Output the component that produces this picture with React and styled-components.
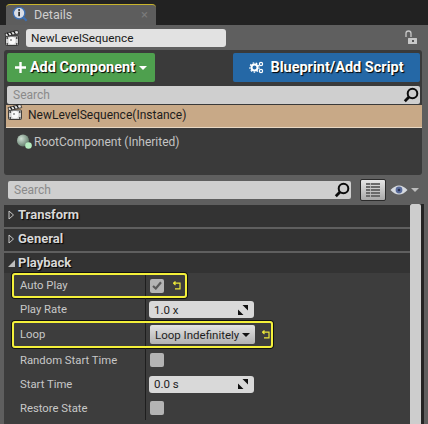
import React from 'react';
import styled, { createGlobalStyle } from 'styled-components';

const GlobalStyle = createGlobalStyle`
  html, body { margin: 0; padding: 0; background: #5f5f5f; }
  * { box-sizing: border-box; }
`;

const Window = styled.div`
  width: 428px;
  height: 424px;
  overflow: hidden;
  background: #5f5f5f;
  font-family: Roboto, "Liberation Sans", sans-serif;
  font-size: 12px;
  color: #d0d0d0;
`;

const TabBar = styled.div`
  height: 25px;
  padding: 4px 0 0 6px;
  background: #222222;
`;

const Tab = styled.div`
  width: 150px;
  height: 21px;
  display: flex;
  align-items: center;
  padding: 0 8px 2px 6px;
  gap: 6px;
  background: #5d5d5d;
  border-top: 1px solid #c9b42c;
  border-radius: 4px 4px 0 0;
  color: #cfcfcf;
  font-size: 12.5px;
`;

const TabClose = styled.span`
  margin-left: auto;
  color: #7a7a7a;
  font-size: 13px;
`;

const NameRow = styled.div`
  height: 25px;
  display: flex;
  align-items: center;
  padding: 0 10px 0 4px;
  gap: 6px;
`;

const NameInput = styled.div`
  width: 200px;
  height: 18px;
  line-height: 18px;
  padding-left: 5px;
  background: #e2e2e2;
  border-radius: 3px;
  color: #1a1a1a;
  font-size: 11.8px;
`;

const LockIcon = styled.svg`
  margin-left: auto;
`;

const ActorPanel = styled.div`
  height: 125px;
  margin: 0 6px 0 4px;
  padding: 3px 2px 0 3px;
  background: #3a3a3a;
  border-radius: 3px;
`;

const ButtonRow = styled.div`
  display: flex;
  justify-content: space-between;
  height: 29px;
`;

const ActionButton = styled.div`
  width: ${p => p.$width}px;
  display: flex;
  align-items: center;
  justify-content: center;
  gap: ${p => p.$gap}px;
  background: ${p => p.$color};
  border-radius: 2px;
  color: #ffffff;
  font-size: 14.5px;
  font-weight: 700;
  text-shadow: 1px 1px 1px #000000;
`;

const SearchBox = styled.div`
  display: flex;
  align-items: center;
  justify-content: space-between;
  height: 18px;
  padding: 0 1px 0 6px;
  background: #cfcfcf;
  border-radius: 2px;
  color: #8a8a8a;
  font-size: 12px;
`;

const ActorSearch = styled(SearchBox)`
  margin-top: 4px;
`;

const SelectedRow = styled.div`
  display: flex;
  align-items: center;
  gap: 5px;
  height: 23px;
  margin: 1px -2px 0 -1px;
  padding: 0 0 3px 1px;
  background: #c8a987;
  border-bottom: 1px solid #e8d8c4;
  color: #1c1c1c;
  font-size: 12px;
`;

const SelectedIcon = styled.span`
  display: flex;
  margin-top: -6px;
`;

const TreeRow = styled.div`
  display: flex;
  align-items: center;
  gap: 1px;
  height: 18px;
  margin-top: 5px;
  padding-left: 9px;
  color: #c4c4c4;
  font-size: 12px;
`;

const FilterRow = styled.div`
  height: 29px;
  display: flex;
  align-items: center;
  padding: 1px 0 0 8px;
`;

const FilterSearch = styled(SearchBox)`
  width: 343px;
`;

const ViewButton = styled.div`
  width: 26px;
  height: 22px;
  margin-left: 9px;
  display: flex;
  align-items: center;
  justify-content: center;
  background: linear-gradient(#e6e6e6, #a9a9a9);
  border: 1px solid #2b2b2b;
  border-radius: 2px;
`;

const EyeWrap = styled.div`
  display: flex;
  align-items: center;
  gap: 3px;
  margin-left: 4px;
`;

const DetailsArea = styled.div`
  display: flex;
  height: 220px;
  margin: 0 4px;
  padding-right: 3px;
  background: #242424;
`;

const PropertyList = styled.div`
  flex: 1;
  display: flex;
  flex-direction: column;
  gap: 2px;
  padding-top: 1px;
  background: #5f5f5f;
`;

const Scrollbar = styled.div`
  width: 11px;
  background: #cdcdcd;
  border-radius: 2px 2px 0 0;
`;

const Category = styled.div`
  flex: none;
  height: ${p => p.$height}px;
  display: flex;
  align-items: center;
  gap: 3px;
  padding: 0 0 ${p => p.$drop}px 4px;
  background: #333333;
  color: #d8d8d8;
  font-size: 13px;
  font-weight: 700;
  text-shadow: 1px 1px 1px #000000;
`;

const Rows = styled.div`
  flex: 1;
  margin-top: -2px;
  background: #3d3d3d;
`;

const PropRow = styled.div`
  position: relative;
  display: grid;
  grid-template-columns: 141px 1fr;
  height: ${p => p.$height || 24}px;
`;

const Highlight = styled.div`
  position: absolute;
  left: 8px;
  top: 0;
  bottom: 0;
  width: ${p => p.$width}px;
  border: 2px solid #f4f03a;
  border-radius: 3px;
  box-shadow: 0 0 0 1px #111111;
  pointer-events: none;
`;

const PropName = styled.div`
  display: flex;
  align-items: center;
  padding-left: 16px;
  color: #c8c8c8;
  font-size: 11.3px;
`;

const PropValue = styled.div`
  display: flex;
  align-items: center;
  gap: ${p => p.$gap || 0}px;
  padding-left: 4px;
  border-left: 1px solid #1e1e1e;
`;

const CheckBox = styled.div`
  width: 14px;
  height: 14px;
  display: flex;
  align-items: center;
  justify-content: center;
  background: #b4b4b4;
  border-radius: 2px;
`;

const NumberField = styled.div`
  width: 105px;
  height: 17px;
  margin-left: -1px;
  display: flex;
  align-items: center;
  justify-content: space-between;
  padding: 0 6px 0 5px;
  background: #d9d9d9;
  border-radius: 3px;
  color: #222222;
  font-size: 11.5px;
`;

const Dropdown = styled.div`
  width: 105px;
  height: 19px;
  display: flex;
  align-items: center;
  justify-content: space-between;
  padding: 0 5px 0 5px;
  background: linear-gradient(#e2e2e2, #b2b2b2);
  border-radius: 2px;
  color: #1e1e1e;
  font-size: 11.5px;
  white-space: nowrap;
`;

const InfoIcon = () => (
  <svg width="16" height="16" viewBox="0 0 18 18">
    <line x1="11" y1="11" x2="16.5" y2="16.5" stroke="#3c6fb4" strokeWidth="2.5" />
    <circle cx="8" cy="8" r="6.5" fill="#d9dde6" stroke="#3c6fb4" strokeWidth="1.5" />
    <rect x="7" y="3.5" width="2" height="2" fill="#333" />
    <rect x="7" y="6.5" width="2" height="5" fill="#333" />
  </svg>
);

const SequenceIcon = () => (
  <svg width="16" height="16" viewBox="0 0 16 16">
    <rect x="1.5" y="6" width="13" height="9.5" rx="1" fill="#d0d0d0" stroke="#1e1e1e" strokeWidth="0.8" />
    <path d="M1 3.6 L13.6 0.4 L14.8 3.6 L2 6.6 Z" fill="#e4e4e4" stroke="#161616" strokeWidth="0.7" />
    <path d="M3.2 2.8 L5 5.6 M6.4 2 L8.2 4.8 M9.6 1.2 L11.4 4" stroke="#161616" strokeWidth="1.3" />
    <circle cx="8" cy="10.7" r="3.6" fill="#fafafa" />
    <path d="M2.5 8 H4 M12 8 H13.5 M2.5 14 H4 M12 14 H13.5" stroke="#2a2a2a" strokeWidth="1.4" />
    <circle cx="7" cy="10" r="1" fill="#8a8a8a" />
  </svg>
);

const LockOpen = () => (
  <LockIcon width="14" height="15" viewBox="0 0 14 15">
    <path d="M2 7 V3.5 A2.5 2.5 0 0 1 7 3.5 V7" fill="none" stroke="#c8c8c8" strokeWidth="1.3" />
    <rect x="4" y="8" width="9" height="6" rx="0.5" fill="#c8c8c8" />
    <rect x="8" y="10" width="2" height="2" fill="#555" />
  </LockIcon>
);

const GearsIcon = () => (
  <svg width="15" height="13" viewBox="0 0 15 13">
    <circle cx="5.5" cy="6.5" r="3" fill="none" stroke="#fff" strokeWidth="2" />
    <circle cx="5.5" cy="6.5" r="4.6" fill="none" stroke="#fff" strokeWidth="1.2" strokeDasharray="1.6 1.6" />
    <circle cx="12" cy="3" r="1.6" fill="none" stroke="#fff" strokeWidth="1.2" />
    <circle cx="12" cy="10" r="1.6" fill="none" stroke="#fff" strokeWidth="1.2" />
  </svg>
);

const Magnifier = () => (
  <svg width="16" height="16" viewBox="0 0 16 16">
    <circle cx="9.5" cy="6.5" r="4.8" fill="none" stroke="#0c0c0c" strokeWidth="2" />
    <line x1="6" y1="10" x2="1.8" y2="14.2" stroke="#0c0c0c" strokeWidth="2.8" />
  </svg>
);

const ComponentBall = () => (
  <svg width="17" height="16" viewBox="0 0 17 16">
    <defs>
      <radialGradient id="ball" cx="35%" cy="35%" r="70%">
        <stop offset="0%" stopColor="#cfe0d4" />
        <stop offset="100%" stopColor="#5f7a68" />
      </radialGradient>
    </defs>
    <circle cx="7" cy="6.5" r="6" fill="url(#ball)" />
    <circle cx="12.5" cy="11.5" r="3.3" fill="#b5ecc0" />
  </svg>
);

const ListIcon = () => (
  <svg width="14" height="14" viewBox="0 0 14 14">
    <path d="M0 1 H14 M0 4 H14 M0 7 H14 M0 10 H14 M0 13 H14" stroke="#6a6a6a" strokeWidth="2" />
    <path d="M4.5 0 V14" stroke="#c2c2c2" strokeWidth="0.8" />
  </svg>
);

const EyeIcon = () => (
  <svg width="18" height="12" viewBox="0 0 18 12">
    <path d="M0.5 6 Q9 -3 17.5 6 Q9 15 0.5 6 Z" fill="#d6dae0" />
    <circle cx="9" cy="6" r="3.4" fill="#5a6c9c" />
    <circle cx="9" cy="6" r="1.3" fill="#2a3252" />
  </svg>
);

const Caret = ({ color, width = 8, height = 4 }) => (
  <svg width={width} height={height} viewBox="0 0 8 4">
    <path d="M0 0 H8 L4 4 Z" fill={color} />
  </svg>
);

const Collapsed = () => (
  <svg width="7" height="10" viewBox="0 0 7 10">
    <path d="M1 1 L5.5 5 L1 9 Z" fill="none" stroke="#c8c8c8" strokeWidth="1" />
  </svg>
);

const Expanded = () => (
  <svg width="7" height="10" viewBox="0 0 7 10">
    <path d="M7 2 V9 H0 Z" fill="#bdbdbd" />
  </svg>
);

const Plus = () => (
  <svg width="11" height="11" viewBox="0 0 11 11">
    <path d="M5.5 0 V11 M0 5.5 H11" stroke="#fff" strokeWidth="2.4" />
  </svg>
);

const Check = () => (
  <svg width="10" height="9" viewBox="0 0 10 9">
    <path d="M1 5 L3.8 7.5 L9 1.2" fill="none" stroke="#5a5a5a" strokeWidth="2.2" />
  </svg>
);

const ResetArrow = () => (
  <svg width="8" height="9" viewBox="0 0 8 9">
    <path d="M2.5 0.5 L0.5 2.2 L2.5 4 M1 2.2 H7 V7.8 H2" fill="none" stroke="#ece83a" strokeWidth="1.2" />
  </svg>
);

const ResizeGrip = () => (
  <svg width="10" height="10" viewBox="0 0 10 10">
    <path d="M4.5 0 H10 V5.5 Z M0 4.5 L5.5 10 H0 Z" fill="#111" />
  </svg>
);

const App = () => (
  <Window>
    <GlobalStyle />
    <TabBar>
      <Tab>
        <InfoIcon />
        Details
        <TabClose>×</TabClose>
      </Tab>
    </TabBar>
    <NameRow>
      <SequenceIcon />
      <NameInput>NewLevelSequence</NameInput>
      <LockOpen />
    </NameRow>
    <ActorPanel>
      <ButtonRow>
        <ActionButton $width={148} $gap={4} $color="#4ea04e">
          <Plus />
          Add Component
          <Caret color="#fff" />
        </ActionButton>
        <ActionButton $width={187} $gap={6} $color="#2568a6">
          <GearsIcon />
          Blueprint/Add Script
        </ActionButton>
      </ButtonRow>
      <ActorSearch>
        Search
        <Magnifier />
      </ActorSearch>
      <SelectedRow>
        <SelectedIcon><SequenceIcon /></SelectedIcon>
        NewLevelSequence(Instance)
      </SelectedRow>
      <TreeRow>
        <ComponentBall />
        RootComponent (Inherited)
      </TreeRow>
    </ActorPanel>
    <FilterRow>
      <FilterSearch>
        Search
        <Magnifier />
      </FilterSearch>
      <ViewButton>
        <ListIcon />
      </ViewButton>
      <EyeWrap>
        <EyeIcon />
        <Caret color="#bdbdbd" />
      </EyeWrap>
    </FilterRow>
    <DetailsArea>
      <PropertyList>
        <Category $height={22} $drop={3}><Collapsed />Transform</Category>
        <Category $height={22} $drop={3}><Collapsed />General</Category>
        <Category $height={20} $drop={1}><Expanded />Playback</Category>
        <Rows>
          <PropRow $height={25}>
            <PropName>Auto Play</PropName>
            <PropValue $gap={9}><CheckBox><Check /></CheckBox><ResetArrow /></PropValue>
            <Highlight $width={175} />
          </PropRow>
          <PropRow $height={23}>
            <PropName>Play Rate</PropName>
            <PropValue><NumberField>1.0 x<ResizeGrip /></NumberField></PropValue>
          </PropRow>
          <PropRow $height={27}>
            <PropName>Loop</PropName>
            <PropValue $gap={7}>
              <Dropdown>Loop Indefinitely<Caret color="#111" /></Dropdown>
              <ResetArrow />
            </PropValue>
            <Highlight $width={261} />
          </PropRow>
          <PropRow>
            <PropName>Random Start Time</PropName>
            <PropValue><CheckBox /></PropValue>
          </PropRow>
          <PropRow>
            <PropName>Start Time</PropName>
            <PropValue><NumberField>0.0 s<ResizeGrip /></NumberField></PropValue>
          </PropRow>
          <PropRow>
            <PropName>Restore State</PropName>
            <PropValue><CheckBox /></PropValue>
          </PropRow>
        </Rows>
      </PropertyList>
      <Scrollbar />
    </DetailsArea>
  </Window>
);

export default App;
